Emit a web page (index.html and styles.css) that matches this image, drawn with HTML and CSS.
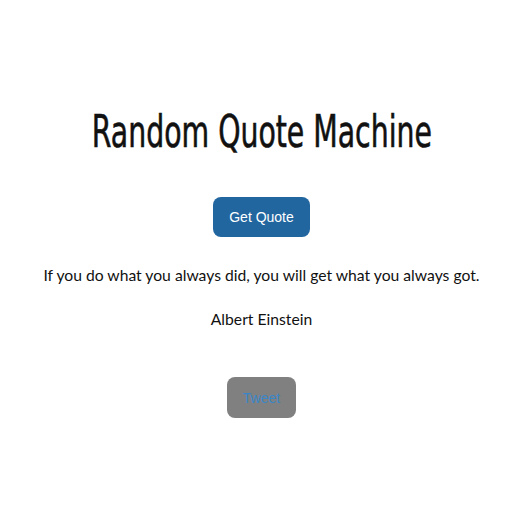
FILE: index.html
```html
<!DOCTYPE html>
<html>
<head>
<meta charset="utf-8">
<link rel="stylesheet" href="styles.css">
</head>
<body>
<main class="machine">
  <h1 class="title"><span class="title-text">Random Quote Machine</span></h1>
  <button class="btn-quote">Get Quote</button>
  <p class="quote">If you do what you always did, you will get what you always got.</p>
  <p class="author">Albert Einstein</p>
  <a class="btn-tweet" href="#">Tweet</a>
</main>
</body>
</html>
```
FILE: styles.css
```css
html, body { margin: 0; padding: 0; background: #fff; }
.machine {
  display: flex;
  flex-direction: column;
  align-items: center;
  padding: 106px 0 0 9px;
  font-family: Lato, "Open Sans", sans-serif;
  color: #111;
}
.title {
  margin: 0;
  white-space: nowrap;
  font-family: "DejaVu Sans", sans-serif;
  font-stretch: condensed;
  font-weight: 400;
  font-size: 45px;
  line-height: 52px;
  color: #111;
  -webkit-text-stroke: 0.6px #111;
}
.title-text {
  display: inline-block;
  transform: scaleX(0.70);
}
.btn-quote {
  margin-top: 39px;
  width: 97px;
  height: 40px;
  border: none;
  border-radius: 8px;
  background: #2266a0;
  color: #fff;
  font-family: "Liberation Sans", Arial, sans-serif;
  font-size: 14px;
}
.quote {
  margin: 26px 0 0;
  font-size: 15.7px;
  line-height: 24px;
}
.author {
  margin: 20px 0 0;
  font-size: 15.7px;
  line-height: 24px;
}
.btn-tweet {
  margin-top: 46px;
  width: 69px;
  height: 41px;
  border-radius: 8px;
  background: #808080;
  color: #3a86c8;
  text-decoration: none;
  font-family: "Liberation Sans", Arial, sans-serif;
  font-size: 14px;
  display: flex;
  align-items: center;
  justify-content: center;
}
```
